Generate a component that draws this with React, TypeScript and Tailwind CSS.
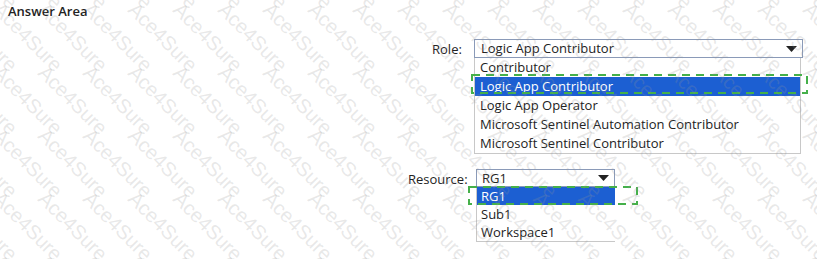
import React from "react";

const font = { fontFamily: '"Open Sans", "Noto Sans", "Liberation Sans", sans-serif' };

function Watermark() {
  const items: { left: number; top: number }[] = [];
  for (let r = -2; r < 5; r++) {
    for (let c = -3; c < 20; c++) {
      items.push({ left: c * 45 + 4, top: r * 63 + 62 });
    }
  }
  return (
    <div className="pointer-events-none absolute inset-0 overflow-hidden">
      {items.map((p, i) => (
        <span
          key={i}
          className="absolute origin-top-left rotate-45 whitespace-nowrap text-[20px] leading-none text-[rgba(150,150,150,0.22)]"
          style={{ left: p.left, top: p.top, fontFamily: '"Liberation Sans", Arial, sans-serif' }}
        >
          Ace4Sure
        </span>
      ))}
    </div>
  );
}

function Arrow() {
  return (
    <svg width="11" height="6" viewBox="0 0 11 6" className="block">
      <path d="M0 0 H11 L5.5 6 Z" fill="#222" />
    </svg>
  );
}

function Dashed({ w, h }: { w: number; h: number }) {
  return (
    <svg width={w} height={h} className="block">
      <rect
        x="1"
        y="1"
        width={w - 2}
        height={h - 2}
        fill="none"
        stroke="#45b04a"
        strokeWidth="2"
        strokeDasharray="8 6"
      />
    </svg>
  );
}

export default function App() {
  const roles = [
    "Contributor",
    "Logic App Contributor",
    "Logic App Operator",
    "Microsoft Sentinel Automation Contributor",
    "Microsoft Sentinel Contributor",
  ];
  const resources = ["RG1", "Sub1", "Workspace1"];
  return (
    <div className="relative h-[259px] w-[817px] overflow-hidden bg-white text-[#222]" style={font}>
      <div className="pl-[8px] pt-[3px] text-[13px] font-semibold leading-[16px] text-[#222]">Answer Area</div>

      <div className="ml-[432px] mt-[20px] flex">
        <div className="w-[42px] pt-[2px] text-[13px] leading-[16px]">Role:</div>
        <div className="relative">
          <div className="flex h-[19px] w-[329px] items-center justify-between border border-[#8a9ab8] pl-[6px] pr-[5px] text-[13px] leading-[17px]">
            <span>Logic App Contributor</span>
            <Arrow />
          </div>
          <div className="w-[327px] border-b border-l border-r border-[#c8c8c8]">
            {roles.map((r) => (
              <div
                key={r}
                className={
                  "h-[19px] pl-[5px] text-[13px] leading-[19px] " +
                  (r === "Logic App Contributor" ? "bg-[#1c5fd2] text-white" : "")
                }
              >
                {r}
              </div>
            ))}
          </div>
          <div className="absolute left-[-3px] top-[35px]">
            <Dashed w={337} h={20} />
          </div>
        </div>
      </div>

      <div className="ml-[408px] mt-[15px] flex">
        <div className="w-[68px] pt-[2px] text-[13px] leading-[16px]">Resource:</div>
        <div className="relative">
          <div className="flex h-[18px] w-[139px] items-center justify-between border border-[#8a9ab8] pl-[5px] pr-[5px] text-[13px] leading-[16px]">
            <span>RG1</span>
            <Arrow />
          </div>
          <div className="w-[139px] border-b border-l border-[#c8c8c8]">
            {resources.map((r) => (
              <div
                key={r}
                className={
                  "h-[18px] pl-[4px] text-[13px] leading-[18px] " +
                  (r === "RG1" ? "bg-[#1c5fd2] text-white" : "")
                }
              >
                {r}
              </div>
            ))}
          </div>
          <div className="absolute left-[-8px] top-[17px]">
            <Dashed w={170} h={19} />
          </div>
        </div>
      </div>

      <Watermark />
    </div>
  );
}
